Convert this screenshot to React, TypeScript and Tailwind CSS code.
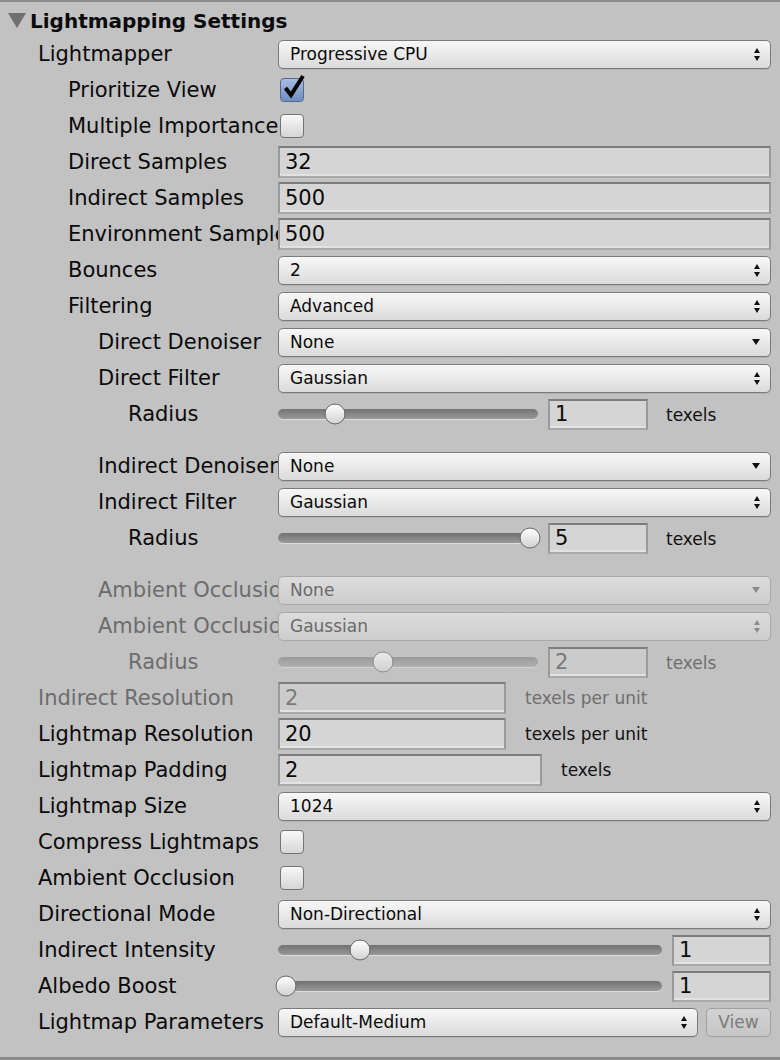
import React from 'react';

type Indent = 0 | 1 | 2 | 3;

const indentClass: Record<Indent, string> = {
  0: 'pl-[38px]',
  1: 'pl-[68px]',
  2: 'pl-[98px]',
  3: 'pl-[128px]',
};

function Row({
  label,
  indent = 0,
  disabled = false,
  children,
}: {
  label: string;
  indent?: Indent;
  disabled?: boolean;
  children?: React.ReactNode;
}) {
  return (
    <div className="flex h-[36px] shrink-0 items-center">
      <div
        className={`${indentClass[indent]} w-[278px] shrink-0 overflow-hidden whitespace-nowrap text-[21px] leading-[28px] ${
          disabled ? 'text-[#6c6c6c]' : 'text-[#0a0a0a]'
        }`}
      >
        {label}
      </div>
      <div className="flex flex-1 items-center pr-[9px]">{children}</div>
    </div>
  );
}

function UpDown({ disabled }: { disabled?: boolean }) {
  const c = disabled ? '#8a8a8a' : '#111';
  return (
    <svg width="6" height="13" viewBox="0 0 6 13">
      <polygon points="0,5 3,0 6,5" fill={c} />
      <polygon points="0,8 6,8 3,13" fill={c} />
    </svg>
  );
}

function Down({ disabled }: { disabled?: boolean }) {
  const c = disabled ? '#8a8a8a' : '#111';
  return (
    <svg width="8" height="6" viewBox="0 0 8 6">
      <polygon points="0,0 8,0 4,6" fill={c} />
    </svg>
  );
}

function Dropdown({
  value,
  single,
  disabled,
  className = 'flex-1',
}: {
  value: string;
  single?: boolean;
  disabled?: boolean;
  className?: string;
}) {
  return (
    <div
      className={`${className} flex h-[29px] items-center justify-between rounded-[5px] border pl-[11px] pr-[10px] text-[17px] leading-[22px] ${
        disabled
          ? 'border-[#a8a8a8] bg-gradient-to-b from-[#dcdcdc] to-[#cdcdcd] text-[#6a6a6a]'
          : 'border-[#7a7a7a] bg-gradient-to-b from-[#f8f8f8] to-[#dadada] text-[#0a0a0a] shadow-[0_1px_0_#b0b0b0]'
      }`}
    >
      <span>{value}</span>
      {single ? <Down disabled={disabled} /> : <UpDown disabled={disabled} />}
    </div>
  );
}

function Field({
  value,
  disabled,
  className = 'flex-1',
  h = 'h-[32px]',
}: {
  value: string;
  disabled?: boolean;
  className?: string;
  h?: string;
}) {
  return (
    <div
      className={`${className} ${h} flex items-center border-2 border-[#9a9a9a] border-t-[#7c7c7c] border-b-[#a9a9a9] pl-[5px] text-[21px] leading-[26px] ${
        disabled ? 'bg-[#cbcbcb] text-[#7a7a7a]' : 'bg-[#d5d5d5] text-[#0a0a0a]'
      } shadow-[inset_0_-2px_0_#e2e2e2]`}
    >
      {value}
    </div>
  );
}

function Check({ checked }: { checked?: boolean }) {
  return (
    <div
      className={`relative ml-[2px] h-[24px] w-[24px] rounded-[4px] border ${
        checked
          ? 'border-[#56698c] bg-gradient-to-b from-[#a8bde0] to-[#6f8dc0]'
          : 'border-[#747474] bg-gradient-to-b from-[#f8f8f8] to-[#d6d6d6]'
      }`}
    >
      {checked && (
        <svg width="24" height="26" viewBox="0 0 24 26" className="absolute left-[1px] top-[-6px]">
          <path d="M3.5 15 L9 22 L21 3" fill="none" stroke="#000" strokeWidth="4" strokeLinejoin="miter" />
        </svg>
      )}
    </div>
  );
}

function Slider({
  width,
  thumb,
  disabled,
}: {
  width: string;
  thumb: number;
  disabled?: boolean;
}) {
  return (
    <div className={`${width} relative flex h-[30px] shrink-0 items-center`}>
      <div
        className={`h-[10px] w-full rounded-full ${
          disabled
            ? 'bg-gradient-to-b from-[#9a9a9a] to-[#b0b0b0] shadow-[0_1px_0_#d4d4d4]'
            : 'bg-gradient-to-b from-[#727272] to-[#999999] shadow-[0_1px_0_#dcdcdc]'
        }`}
      />
      <div
        className={`absolute top-1/2 h-[21px] w-[21px] -translate-x-1/2 -translate-y-1/2 rounded-full border ${
          disabled
            ? 'border-[#8e8e8e] bg-gradient-to-b from-[#ebebeb] to-[#cfcfcf]'
            : 'border-[#6a6a6a] bg-gradient-to-b from-[#ffffff] to-[#d2d2d2]'
        }`}
        style={{ left: thumb }}
      />
    </div>
  );
}

function Unit({ text, disabled, className }: { text: string; disabled?: boolean; className: string }) {
  return (
    <span className={`${className} whitespace-nowrap text-[17px] leading-[22px] ${disabled ? 'text-[#6e6e6e]' : 'text-[#111]'}`}>
      {text}
    </span>
  );
}

function RadiusRow({ thumb, value, disabled }: { thumb: number; value: string; disabled?: boolean }) {
  return (
    <Row label="Radius" indent={3} disabled={disabled}>
      <Slider width="w-[260px]" thumb={thumb} disabled={disabled} />
      <Field value={value} disabled={disabled} className="ml-[10px] w-[100px]" h="h-[31px]" />
      <Unit text="texels" disabled={disabled} className="ml-[18px] mt-[2px]" />
    </Row>
  );
}

export default function App() {
  return (
    <div className="flex h-[1060px] w-[780px] flex-col border-t-2 border-b-[3px] border-t-[#8c8c8c] border-b-[#8a8a8a] bg-[#c2c2c2] font-['DejaVu_Sans',sans-serif]">
      <div className="flex h-[34px] shrink-0 items-center pl-[8px] pt-[3px]">
        <svg width="18" height="15" viewBox="0 0 18 15">
          <polygon points="0,0 18,0 9,15" fill="#6f6f6f" />
        </svg>
        <span className="ml-[4px] text-[20px] font-bold leading-[26px] text-[#0a0a0a]">Lightmapping Settings</span>
      </div>

      <Row label="Lightmapper">
        <Dropdown value="Progressive CPU" />
      </Row>
      <Row label="Prioritize View" indent={1}>
        <Check checked />
      </Row>
      <Row label="Multiple Importance Sampling" indent={1}>
        <Check />
      </Row>
      <Row label="Direct Samples" indent={1}>
        <Field value="32" />
      </Row>
      <Row label="Indirect Samples" indent={1}>
        <Field value="500" />
      </Row>
      <Row label="Environment Samples" indent={1}>
        <Field value="500" />
      </Row>
      <Row label="Bounces" indent={1}>
        <Dropdown value="2" />
      </Row>
      <Row label="Filtering" indent={1}>
        <Dropdown value="Advanced" />
      </Row>
      <Row label="Direct Denoiser" indent={2}>
        <Dropdown value="None" single />
      </Row>
      <Row label="Direct Filter" indent={2}>
        <Dropdown value="Gaussian" />
      </Row>
      <RadiusRow thumb={57} value="1" />
      <div className="h-[16px] shrink-0" />
      <Row label="Indirect Denoiser" indent={2}>
        <Dropdown value="None" single />
      </Row>
      <Row label="Indirect Filter" indent={2}>
        <Dropdown value="Gaussian" />
      </Row>
      <RadiusRow thumb={252} value="5" />
      <div className="h-[16px] shrink-0" />
      <Row label="Ambient Occlusion Denoiser" indent={2} disabled>
        <Dropdown value="None" single disabled />
      </Row>
      <Row label="Ambient Occlusion Filter" indent={2} disabled>
        <Dropdown value="Gaussian" disabled />
      </Row>
      <RadiusRow thumb={105} value="2" disabled />
      <Row label="Indirect Resolution" disabled>
        <Field value="2" disabled className="w-[228px]" />
        <Unit text="texels per unit" disabled className="ml-[19px]" />
      </Row>
      <Row label="Lightmap Resolution">
        <Field value="20" className="w-[228px]" />
        <Unit text="texels per unit" className="ml-[19px]" />
      </Row>
      <Row label="Lightmap Padding">
        <Field value="2" className="w-[264px]" />
        <Unit text="texels" className="ml-[19px]" />
      </Row>
      <Row label="Lightmap Size">
        <Dropdown value="1024" />
      </Row>
      <Row label="Compress Lightmaps">
        <Check />
      </Row>
      <Row label="Ambient Occlusion">
        <Check />
      </Row>
      <Row label="Directional Mode">
        <Dropdown value="Non-Directional" />
      </Row>
      <Row label="Indirect Intensity">
        <Slider width="w-[384px]" thumb={82} />
        <Field value="1" className="ml-[10px] flex-1" h="h-[31px]" />
      </Row>
      <Row label="Albedo Boost">
        <Slider width="w-[384px]" thumb={8} />
        <Field value="1" className="ml-[10px] flex-1" h="h-[31px]" />
      </Row>
      <Row label="Lightmap Parameters">
        <Dropdown value="Default-Medium" className="w-[420px]" />
        <div className="ml-[8px] flex h-[29px] flex-1 items-center justify-center rounded-[5px] border border-[#a0a0a0] bg-gradient-to-b from-[#d2d2d2] to-[#c6c6c6] text-[17px] leading-[22px] text-[#7a7a7a]">
          View
        </div>
      </Row>
      <div className="flex-1" />
    </div>
  );
}
